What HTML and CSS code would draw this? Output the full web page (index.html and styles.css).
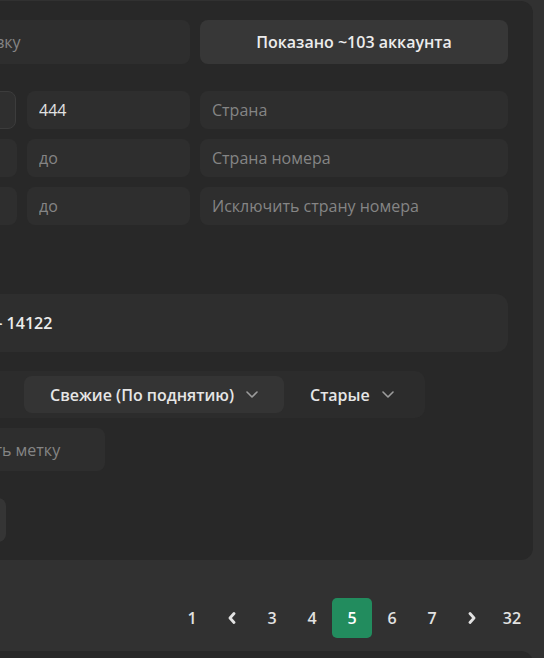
FILE: index.html
```html
<!DOCTYPE html>
<html lang="ru">
<head>
<meta charset="utf-8">
<title>Аккаунты</title>
<link rel="stylesheet" href="styles.css">
</head>
<body>
<div class="page">
  <section class="card">
    <div class="row-top">
      <input class="field field-wide" type="text" placeholder="Поиск по заголовку">
      <button class="btn-count">Показано ~103 аккаунта</button>
    </div>
    <div class="filters">
      <div class="select">Метка</div>
      <input class="field" type="text" value="444">
      <input class="field" type="text" placeholder="Страна">
      <input class="field" type="text" placeholder="от">
      <input class="field" type="text" placeholder="до">
      <input class="field" type="text" placeholder="Страна номера">
      <input class="field" type="text" placeholder="от">
      <input class="field" type="text" placeholder="до">
      <input class="field" type="text" placeholder="Исключить страну номера">
    </div>
    <div class="total">Всего товаров - 14122</div>
    <div class="sort">
      <button class="sort-btn sort-first">По рейтингу
        <svg class="chev" viewBox="0 0 12 7" width="12" height="7"><polyline points="1,1 6,6 11,1"/></svg>
      </button>
      <button class="sort-btn active">Свежие (По поднятию)
        <svg class="chev" viewBox="0 0 12 7" width="12" height="7"><polyline points="1,1 6,6 11,1"/></svg>
      </button>
      <button class="sort-btn">Старые
        <svg class="chev" viewBox="0 0 12 7" width="12" height="7"><polyline points="1,1 6,6 11,1"/></svg>
      </button>
    </div>
    <input class="field field-tag" type="text" placeholder="Найти или создать метку">
    <button class="btn-apply">Применить</button>
  </section>
  <nav class="pager">
    <a class="pg">1</a>
    <a class="pg"><svg viewBox="0 0 8 12" width="8" height="12"><polyline points="6,1.5 2,6 6,10.5"/></svg></a>
    <a class="pg">3</a>
    <a class="pg">4</a>
    <a class="pg current">5</a>
    <a class="pg">6</a>
    <a class="pg">7</a>
    <a class="pg"><svg viewBox="0 0 8 12" width="8" height="12"><polyline points="2,1.5 6,6 2,10.5"/></svg></a>
    <a class="pg">32</a>
  </nav>
  <section class="card card-next"></section>
</div>
</body>
</html>
```

FILE: styles.css
```css
* { box-sizing: border-box; }

body {
  margin: 0;
  background: #313131;
  font-family: "Open Sans", "Noto Sans", sans-serif;
  overflow: hidden;
}

.page {
  margin-left: -172px;
  width: 705px;
  padding-top: 1px;
}

.card {
  background: #282828;
  border-radius: 12px;
  padding: 19px 25px 18px;
}

.row-top {
  display: grid;
  grid-template-columns: 1fr 308px;
  column-gap: 10px;
}

.field {
  display: block;
  width: 100%;
  height: 38px;
  border: none;
  outline: none;
  border-radius: 8px;
  background: #2e2e2e;
  color: #e2e2e2;
  font-family: inherit;
  font-size: 16px;
  padding: 0 12px;
}

.field::placeholder { color: #858585; }

.field-wide {
  height: 44px;
  padding-left: 15px;
}

.btn-count {
  height: 44px;
  border: none;
  border-radius: 8px;
  background: #373737;
  color: #ececec;
  font-family: inherit;
  font-size: 16px;
  font-weight: 600;
}

.filters {
  margin-top: 27px;
  display: grid;
  grid-template-columns: 1fr 163px 308px;
  column-gap: 10px;
  row-gap: 10px;
}

.select {
  height: 38px;
  margin-right: 1px;
  border: 1px solid #3c3c3c;
  border-radius: 8px;
  background: #2f2f2f;
  color: #e2e2e2;
  font-size: 16px;
  line-height: 36px;
  padding: 0 12px;
}

.total {
  margin-top: 69px;
  height: 58px;
  border-radius: 12px;
  background: #2e2e2e;
  color: #ececec;
  font-size: 16px;
  font-weight: 600;
  line-height: 58px;
  padding: 0 14px 0 25px;
  white-space: nowrap;
}

.sort {
  margin-top: 19px;
  display: inline-flex;
  padding: 5px;
  border-radius: 10px;
  background: #2c2c2c;
}

.sort-btn {
  display: flex;
  align-items: center;
  gap: 12px;
  height: 37px;
  padding: 0 26px;
  border: none;
  border-radius: 8px;
  background: transparent;
  color: #e6e6e6;
  font-family: inherit;
  font-size: 16px;
  font-weight: 600;
  white-space: nowrap;
}

.sort-first { padding-left: 15px; }

.sort-btn.active { background: #343434; }

.chev {
  fill: none;
  stroke: #9c9c9c;
  stroke-width: 1.6;
  stroke-linecap: round;
  stroke-linejoin: round;
}

.field-tag {
  margin-top: 10px;
  width: 252px;
  height: 43px;
}

.btn-apply {
  display: block;
  margin-top: 27px;
  width: 153px;
  height: 44px;
  border: none;
  border-radius: 8px;
  background: #353535;
  color: #ececec;
  font-family: inherit;
  font-size: 16px;
  font-weight: 600;
}

.pager {
  display: flex;
  justify-content: flex-end;
  padding-right: 1px;
  margin-top: 38px;
  margin-bottom: 13px;
}

.pg {
  width: 40px;
  height: 40px;
  display: flex;
  align-items: center;
  justify-content: center;
  color: #e2e2e2;
  font-size: 16px;
  font-weight: 600;
  border-radius: 5px;
}

.pg svg {
  fill: none;
  stroke: #e2e2e2;
  stroke-width: 2.8;
  stroke-linecap: round;
  stroke-linejoin: round;
}

.pg.current {
  background: #228c5e;
  color: #ffffff;
}

.card-next {
  height: 40px;
  padding: 0;
}
```
